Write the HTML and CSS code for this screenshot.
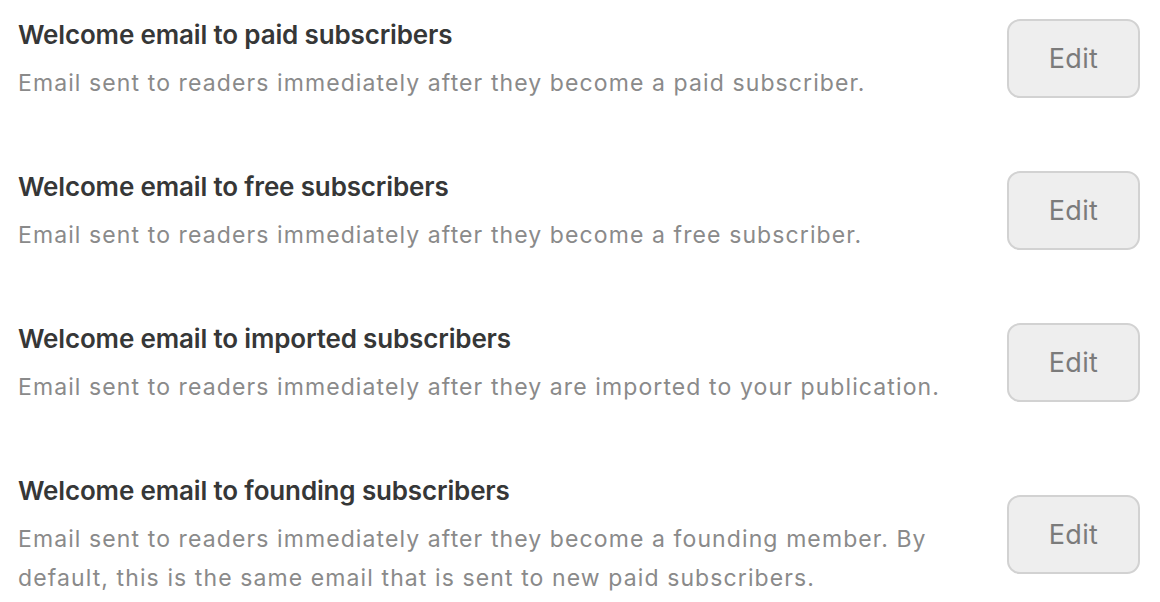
FILE: index.html
```html
<!DOCTYPE html>
<html>
<head>
<meta charset="utf-8">
<link rel="stylesheet" href="styles.css">
</head>
<body>
<div class="list">
  <div class="row">
    <div class="info">
      <div class="title">Welcome email to paid subscribers</div>
      <div class="desc">Email sent to readers immediately after they become a paid subscriber.</div>
    </div>
    <button class="edit">Edit</button>
  </div>
  <div class="row">
    <div class="info">
      <div class="title">Welcome email to free subscribers</div>
      <div class="desc">Email sent to readers immediately after they become a free subscriber.</div>
    </div>
    <button class="edit">Edit</button>
  </div>
  <div class="row">
    <div class="info">
      <div class="title">Welcome email to imported subscribers</div>
      <div class="desc">Email sent to readers immediately after they are imported to your publication.</div>
    </div>
    <button class="edit">Edit</button>
  </div>
  <div class="row">
    <div class="info">
      <div class="title">Welcome email to founding subscribers</div>
      <div class="desc">Email sent to readers immediately after they become a founding member. By default, this is the same email that is sent to new paid subscribers.</div>
    </div>
    <button class="edit">Edit</button>
  </div>
</div>
</body>
</html>
```
FILE: styles.css
```css
html, body {
  margin: 0;
  padding: 0;
  background: #ffffff;
}
body {
  font-family: Inter, "Noto Sans", sans-serif;
}
.list {
  display: flex;
  flex-direction: column;
  gap: 68px;
  padding: 19px 20px 0 18px;
}
.row {
  display: flex;
  align-items: center;
  gap: 60px;
}
.info {
  flex: 1;
  min-width: 0;
}
.title {
  font-size: 26px;
  line-height: 32px;
  font-weight: 600;
  letter-spacing: -0.15px;
  color: #363737;
  margin-bottom: 13px;
}
.desc {
  font-size: 23px;
  line-height: 39px;
  letter-spacing: 1.1px;
  color: #8a8a8a;
}
.edit {
  flex: none;
  width: 133px;
  height: 79px;
  margin-top: -5px;
  border: 2px solid #d2d2d2;
  border-radius: 13px;
  background: #eeeeee;
  color: #7b7b7b;
  font-family: Inter, "Noto Sans", sans-serif;
  font-size: 27px;
  letter-spacing: 0.3px;
  padding: 0;
}
```
